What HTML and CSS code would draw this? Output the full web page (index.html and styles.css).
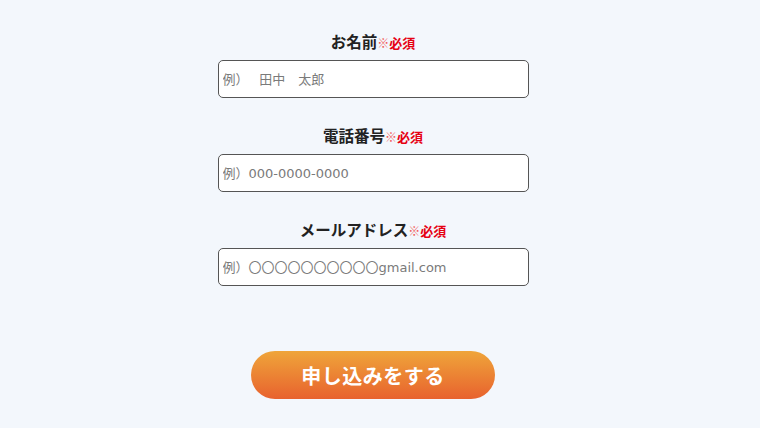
FILE: index.html
```html
<!DOCTYPE html>
<html lang="ja">
<head>
    <meta charset="UTF-8">
    <meta name="viewport" content="width=device-width, initial-scale=1.0">
    <title>お申し込みフォーム</title>
    <link rel="stylesheet" href="styles.css">
</head>
<body>
    <form class="form">
        <div class="field">
            <label class="label" for="name">お名前<span class="mark">※</span><span class="req">必須</span></label>
            <input class="input" id="name" type="text" placeholder="例）　 田中　太郎">
        </div>
        <div class="field">
            <label class="label" for="tel">電話番号<span class="mark">※</span><span class="req">必須</span></label>
            <input class="input" id="tel" type="tel" placeholder="例）000-0000-0000">
        </div>
        <div class="field">
            <label class="label" for="mail">メールアドレス<span class="mark">※</span><span class="req">必須</span></label>
            <input class="input" id="mail" type="email" placeholder="例）〇〇〇〇〇〇〇〇〇〇gmail.com">
        </div>
        <button class="submit" type="button">申し込みをする</button>
    </form>
</body>
</html>
```

FILE: styles.css
```css
body {
    margin: 0;
    padding: 0;
    background-color: #f3f7fc;
    font-family: "Noto Sans CJK JP", "Noto Sans", sans-serif;
    color: #222;
}
.form {
    display: flex;
    flex-direction: column;
    align-items: center;
    padding: 29px 14px 0 0;
}
.field {
    display: flex;
    flex-direction: column;
    align-items: center;
    margin-bottom: 25px;
}
.label {
    display: block;
    height: 24px;
    line-height: 24px;
    margin-bottom: 7px;
    font-size: 15.5px;
    font-weight: bold;
    color: #222;
}
.mark {
    font-size: 12px;
    font-weight: normal;
    color: #f25a5a;
}
.req {
    font-size: 13px;
    font-weight: bold;
    color: #e60012;
}
.input {
    box-sizing: border-box;
    width: 311px;
    height: 38px;
    padding: 0 4px;
    border: 1px solid #555;
    border-radius: 5px;
    background: #fff;
    font-family: "DejaVu Sans", "Noto Sans CJK JP", sans-serif;
    font-size: 13px;
    color: #333;
    outline: none;
}
.input::placeholder {
    color: #7a7a7a;
}
.submit {
    margin-top: 40px;
    width: 244px;
    height: 48px;
    border: none;
    border-radius: 24px;
    background: linear-gradient(to bottom, #efa53a, #e8622e);
    color: #fff;
    font-family: "Noto Sans CJK JP", sans-serif;
    font-size: 20px;
    font-weight: bold;
    letter-spacing: 0.5px;
    cursor: pointer;
}
```
